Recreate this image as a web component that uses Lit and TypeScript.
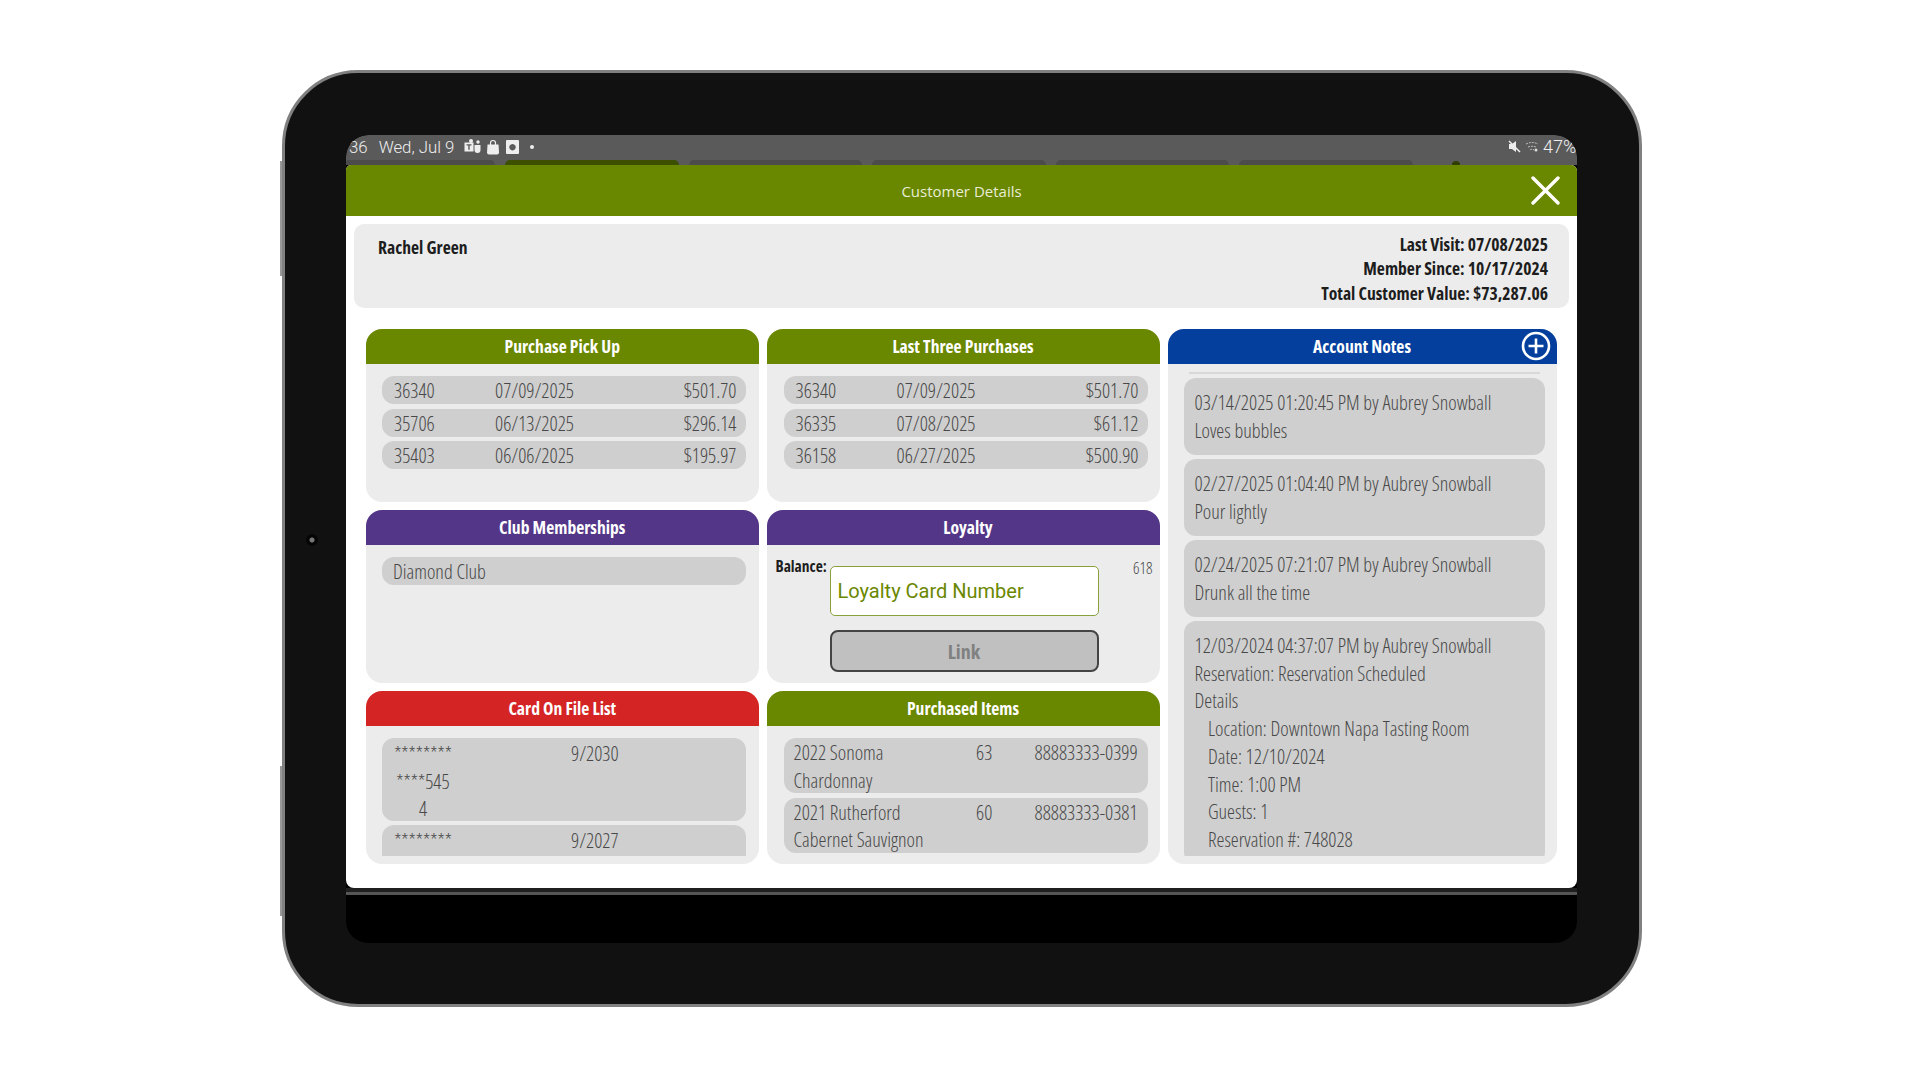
import { LitElement, css, html, svg } from 'lit';
import { customElement } from 'lit/decorators.js';

const pickups = [
  ['36340', '07/09/2025', '$501.70'],
  ['35706', '06/13/2025', '$296.14'],
  ['35403', '06/06/2025', '$195.97'],
];
const lastThree = [
  ['36340', '07/09/2025', '$501.70'],
  ['36335', '07/08/2025', '$61.12'],
  ['36158', '06/27/2025', '$500.90'],
];
const items = [
  ['2022 Sonoma Chardonnay', '63', '88883333-0399'],
  ['2021 Rutherford Cabernet Sauvignon', '60', '88883333-0381'],
];
const notes = [
  ['03/14/2025 01:20:45 PM by Aubrey Snowball', 'Loves bubbles'],
  ['02/27/2025 01:04:40 PM by Aubrey Snowball', 'Pour lightly'],
  ['02/24/2025 07:21:07 PM by Aubrey Snowball', 'Drunk all the time'],
];
const reservation = ['Location: Downtown Napa Tasting Room', 'Date: 12/10/2024', 'Time: 1:00 PM', 'Guests: 1', 'Reservation #: 748028'];

const closeIcon = svg`<path d="M2 2 27 27M27 2 2 27" stroke="#fff" stroke-width="3.4" stroke-linecap="round" fill="none"/>`;
const plusIcon = svg`<circle cx="15" cy="15" r="13" stroke="#fff" stroke-width="2.6" fill="none"/><path d="M15 7.500v15M7.500 15h15" stroke="#fff" stroke-width="2.6" fill="none"/>`;

@customElement('app-root')
export class AppRoot extends LitElement {
  static styles = css`
    :host {
      display: block;
      width: 1920px;
      height: 1080px;
      background: #fff;
      overflow: hidden;
      font-family: 'Open Sans', sans-serif;
      font-stretch: 75%;
      font-weight: 300;
      color: #484848;
      font-size: 20px;
    }
    .device {
      position: relative;
      box-sizing: border-box;
      width: 1360px;
      height: 937px;
      margin: 70px 0 0 282px;
      padding: 62px 61px 0;
      background: #111;
      border: 3px solid #808080;
      border-radius: 76px;
    }
    .key {
      position: absolute;
      left: -5px;
      width: 2px;
      background: #999;
    }
    .camera {
      position: absolute;
      left: 21px;
      top: 461px;
      width: 12px;
      height: 12px;
      border-radius: 50%;
      background: radial-gradient(circle, #777 0 2px, #050505 3px);
    }
    .screen {
      width: 1231px;
      height: 808px;
      background: #000;
      border-radius: 22px;
      overflow: hidden;
    }
    .status {
      height: 30px;
      background: #5a5a5a;
      border-radius: 22px 22px 0 0;
      display: flex;
      flex-direction: column;
      font-family: Roboto, sans-serif;
      font-stretch: 100%;
      color: #eee;
      font-size: 16.8px;
    }
    .status-row {
      box-sizing: border-box;
      height: 25px;
      padding: 0 0 2px 3px;
      display: flex;
      align-items: center;
      overflow: hidden;
      flex: none;
    }
    .status-row .date { margin-left: 11px; margin-right: 9px; }
    .status-row svg { margin-right: 4px; flex: none; }
    .status-right { margin-left: auto; display: flex; align-items: center; width: 69px; white-space: nowrap; font-size: 18px; }
    .status-right svg + svg { margin-right: 4px; }
    .tabs { display: flex; align-items: flex-end; height: 5px; gap: 10px; }
    .tab { width: 173.5px; height: 5px; background: #4c4c4c; border-radius: 6px 6px 0 0; flex: none; }
    .tab.stub { width: 151px; margin-left: -2px; }
    .tab.on { background: #3d4f00; }
    .tab.pin { width: 8px; margin-left: 29px; height: 4px; background: #2f3d00; border-radius: 4px 4px 0 0; }
    .modal {
      height: 723px;
      background: #fff;
      border-radius: 5px 6px 8px 8px;
      overflow: hidden;
    }
    .modal-head {
      height: 51px;
      background: #6a8700;
      position: relative;
      display: flex;
      align-items: center;
      justify-content: center;
      font-stretch: 100%;
      font-weight: 400;
      font-size: 15px;
      color: #e8edd6;
    }
    .modal-head svg { position: absolute; right: 17px; top: 11px; }
    .strip { height: 4px; background: #1f1f1f; }
    .strip2 { height: 3px; background: #555; }
    .info {
      box-sizing: border-box;
      height: 84px;
      margin: 8px 8px 0;
      padding: 8px 21px 0 24px;
      background: #ececec;
      border-radius: 10px;
      display: flex;
      justify-content: space-between;
      color: #1d1d1d;
      font-weight: 700;
      font-size: 17.6px;
      line-height: 24.3px;
    }
    .info-right { text-align: right; }
    .name { margin-top: 3px; }
    .grid {
      display: grid;
      margin: 21px 0 0 20px;
      grid-template-columns: 392.5px 393px 389px;
      grid-template-rows: 173px 173px 173px;
      gap: 8px;
    }
    .panel {
      background: #ececec;
      border-radius: 16px;
      overflow: hidden;
      display: flex;
      flex-direction: column;
      min-height: 0;
    }
    .notes-panel { grid-row: 1 / 4; grid-column: 3; }
    .title {
      height: 35px;
      box-sizing: border-box;
      padding-bottom: 2px;
      flex: none;
      position: relative;
      display: flex;
      align-items: center;
      justify-content: center;
      color: #fff;
      font-weight: 700;
      font-size: 17.6px;
    }
    .title svg { position: absolute; right: 6px; top: 2px; }
    .green { background: #6a8700; }
    .purple { background: #533688; }
    .red { background: #d42424; }
    .blue { background: #043f9e; }
    .shift { padding-left: 10px; }
    .body {
      flex: 1;
      min-height: 0;
      padding: 12px 13px 8px 16px;
      display: flex;
      flex-direction: column;
      gap: 4.5px;
    }
    .body.second { padding-left: 17px; padding-right: 12px; }
    .clip {
      flex: 1;
      min-height: 0;
      overflow: hidden;
      display: flex;
      flex-direction: column;
      gap: 4px;
    }
    .row {
      flex: none;
      height: 28px;
      box-sizing: border-box;
      padding: 1px 9px 0 12px;
      background: #cfcfcf;
      border-radius: 12px;
      display: grid;
      grid-template-columns: 101px 1fr auto;
      align-items: center;
      line-height: 27px;
    }
    .club { padding-left: 11px; display: block; }
    .card {
      flex: none;
      box-sizing: border-box;
      height: 83px;
      padding: 2px 12px 0;
      background: #cfcfcf;
      border-radius: 12px;
      display: grid;
      grid-template-columns: 58px 1fr;
      column-gap: 119px;
      line-height: 27.7px;
    }
    .num { text-align: center; }
    .item {
      flex: none;
      box-sizing: border-box;
      height: 55px;
      padding: 1px 9px 0 10px;
      background: #cfcfcf;
      border-radius: 12px;
      display: grid;
      grid-template-columns: 182.5px 58.5px auto;
      line-height: 27.7px;
    }
    .item-name { max-width: 140px; }
    .sku { white-space: nowrap; }
    .loyalty {
      display: grid;
      grid-template-columns: 54px 269px 1fr;
      row-gap: 14px;
      padding: 21px 7px 0 9px;
    }
    .balance { font-size: 15.5px; font-weight: 700; color: #1d1d1d; line-height: 16px; margin-top: -8px; white-space: nowrap; }
    .points { font-size: 16px; text-align: right; line-height: 16px; margin-top: -6px; }
    .card-input {
      box-sizing: border-box;
      height: 50px;
      border: 1.5px solid #8aa03a;
      border-radius: 5px;
      background: #fff;
      padding-left: 7px;
      display: flex;
      align-items: center;
      color: #6a8700;
      font-family: Roboto, sans-serif;
      font-stretch: 100%;
      font-weight: 400;
      font-size: 20px;
    }
    .link {
      grid-column: 2;
      box-sizing: border-box;
      height: 42px;
      border: 2px solid #444;
      border-radius: 8px;
      background: #c0c0c0;
      color: #808080;
      font: inherit;
      font-size: 20px;
      font-weight: 700;
    }
    .list {
      flex: 1;
      min-height: 0;
      overflow: hidden;
      margin: 0 12px 8px 16px;
      display: flex;
      flex-direction: column;
      gap: 4px;
      padding-top: 8px;
    }
    .remnant { flex: none; height: 2px; margin: 0 5px; background: #d8d8d8; }
    .note {
      flex: none;
      padding: 11px 11px 10.6px;
      background: #cfcfcf;
      border-radius: 12px;
      line-height: 27.7px;
    }
    .indent { padding-left: 13.5px; }
  `;

  renderOrderRow(row: string[]) {
    return html`<div class="row"><span>${row[0]}</span><span>${row[1]}</span><span>${row[2]}</span></div>`;
  }

  render() {
    return html`
      <div class="device">
        <i class="key" style="top:88px;height:115px"></i>
        <i class="key" style="top:693px;height:150px"></i>
        <i class="camera"></i>
        <div class="screen">
          <div class="status">
            <div class="status-row">
              <span>36</span><span class="date">Wed, Jul 9</span>
              <svg width="19" height="16" viewBox="0 0 19 16"><path fill="#eee" fill-rule="evenodd" d="M1.500 3.500h9v9h-9zM3.500 5.200v1.300h1.800v4.300h1.400V6.500h1.800V5.200z"/><path fill="#eee" d="M11.500 6h6v5a3 3 0 0 1-6 0z"/><circle cx="8" cy="2" r="2" fill="#eee"/><circle cx="15" cy="3" r="1.700" fill="#eee"/></svg>
              <svg width="14" height="16" viewBox="0 0 14 16"><path fill="#eee" d="M1.500 5.500h11l.5 8a2 2 0 0 1-2 2H3a2 2 0 0 1-2-2z"/><path fill="none" stroke="#eee" stroke-width="1.200" d="M4.500 6V4a2.500 2.500 0 0 1 5 0v2"/></svg>
              <svg width="13" height="14" viewBox="0 0 13 14" style="margin-left:2px"><path fill="#eee" fill-rule="evenodd" d="M1 0h11a1 1 0 0 1 1 1v12a1 1 0 0 1-1 1H1a1 1 0 0 1-1-1V1a1 1 0 0 1 1-1zM6.500 4a3.200 3.200 0 1 0 .01 0z"/></svg>
              <svg width="4" height="4" viewBox="0 0 4 4" style="margin-left:7px"><circle cx="2" cy="2" r="2" fill="#eee"/></svg>
              <div class="status-right">
                <svg width="13" height="13" viewBox="0 0 13 13"><path fill="#eee" d="M1 4h3l4-3v11L4 9H1z"/><path stroke="#eee" stroke-width="1.500" d="M1 1l11 11"/></svg>
                <svg width="14" height="12" viewBox="0 0 14 12"><path stroke="#bbb" stroke-dasharray="2 1" fill="none" d="M1 3c4-2 8-2 12 0M3 6c3-1 5-1 8 0M5 9c1-1 3-1 4 0"/><circle cx="11" cy="9" r="1.500" fill="#ddd"/></svg>
                <span>47%</span>
              </div>
            </div>
            <div class="tabs">
              <i class="tab stub"></i><i class="tab on"></i><i class="tab"></i><i class="tab"></i><i class="tab"></i><i class="tab"></i><i class="tab pin"></i>
            </div>
          </div>
          <div class="modal">
            <div class="modal-head">
              Customer Details
              <svg width="29" height="29" viewBox="0 0 29 29">${closeIcon}</svg>
            </div>
            <div class="info">
              <div class="name">Rachel Green</div>
              <div class="info-right">
                <div>Last Visit: 07/08/2025</div>
                <div>Member Since: 10/17/2024</div>
                <div>Total Customer Value: $73,287.06</div>
              </div>
            </div>
            <div class="grid">
              <section class="panel">
                <div class="title green">Purchase Pick Up</div>
                <div class="body">${pickups.map((r) => this.renderOrderRow(r))}</div>
              </section>
              <section class="panel">
                <div class="title green">Last Three Purchases</div>
                <div class="body second">${lastThree.map((r) => this.renderOrderRow(r))}</div>
              </section>
              <section class="panel notes-panel">
                <div class="title blue">
                  Account Notes
                  <svg width="30" height="30" viewBox="0 0 30 30">${plusIcon}</svg>
                </div>
                <div class="list">
                  <div class="remnant"></div>
                  ${notes.map((n) => html`<div class="note"><div>${n[0]}</div><div>${n[1]}</div></div>`)}
                  <div class="note">
                    <div>12/03/2024 04:37:07 PM by Aubrey Snowball</div>
                    <div>Reservation: Reservation Scheduled</div>
                    <div>Details</div>
                    ${reservation.map((t) => html`<div class="indent">${t}</div>`)}
                  </div>
                </div>
              </section>
              <section class="panel">
                <div class="title purple">Club Memberships</div>
                <div class="body"><div class="row club">Diamond Club</div></div>
              </section>
              <section class="panel">
                <div class="title purple shift">Loyalty</div>
                <div class="loyalty">
                  <div class="balance">Balance:</div>
                  <div class="card-input">Loyalty Card Number</div>
                  <div class="points">618</div>
                  <button class="link">Link</button>
                </div>
              </section>
              <section class="panel">
                <div class="title red">Card On File List</div>
                <div class="body">
                  <div class="clip">
                    <div class="card"><div class="num">********<br />****545<br />4</div><div>9/2030</div></div>
                    <div class="card"><div class="num">********</div><div>9/2027</div></div>
                  </div>
                </div>
              </section>
              <section class="panel">
                <div class="title green">Purchased Items</div>
                <div class="body second">
                  ${items.map((i) => html`<div class="item"><div class="item-name">${i[0]}</div><div>${i[1]}</div><div class="sku">${i[2]}</div></div>`)}
                </div>
              </section>
            </div>
          </div>
          <div class="strip"></div>
          <div class="strip2"></div>
        </div>
      </div>
    `;
  }
}
